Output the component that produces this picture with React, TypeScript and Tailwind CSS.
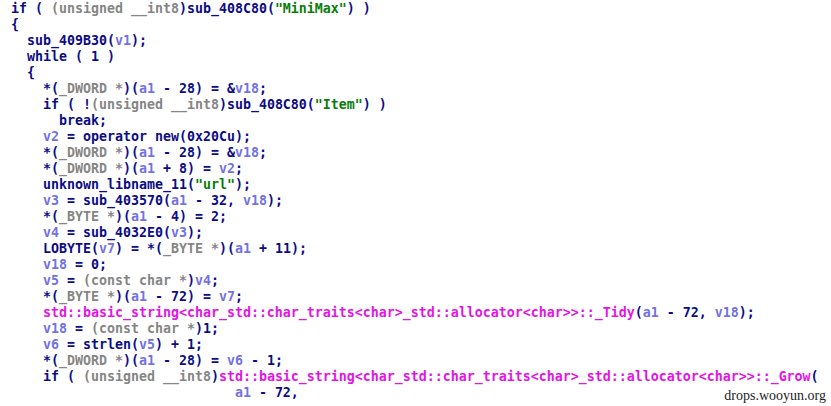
type Seg = [string, string];

const N = "text-[#0c0c86]";
const V = "text-[#7272e2]";
const G = "text-[#858585]";
const S = "text-[#0a7d0a]";
const M = "text-[#e414e4]";

const STD = "std::basic_string<char_std::char_traits<char>_std::allocator<char>>::";

const lines: [number, Seg[]][] = [
  [0, [[N, "if ( "], [G, "(unsigned __int8"], [N, ")sub_408C80("], [S, '"MiniMax"'], [N, ") )"]]],
  [0, [[N, "{"]]],
  [2, [[N, "sub_409B30("], [V, "v1"], [N, ");"]]],
  [2, [[N, "while ( 1 )"]]],
  [2, [[N, "{"]]],
  [4, [[N, "*("], [G, "_DWORD *"], [N, ")("], [V, "a1"], [N, " - 28) = &"], [V, "v18"], [N, ";"]]],
  [4, [[N, "if ( !"], [G, "(unsigned __int8"], [N, ")sub_408C80("], [S, '"Item"'], [N, ") )"]]],
  [6, [[N, "break;"]]],
  [4, [[V, "v2"], [N, " = operator new(0x20Cu);"]]],
  [4, [[N, "*("], [G, "_DWORD *"], [N, ")("], [V, "a1"], [N, " - 28) = &"], [V, "v18"], [N, ";"]]],
  [4, [[N, "*("], [G, "_DWORD *"], [N, ")("], [V, "a1"], [N, " + 8) = "], [V, "v2"], [N, ";"]]],
  [4, [[N, "unknown_libname_11("], [S, '"url"'], [N, ");"]]],
  [4, [[V, "v3"], [N, " = sub_403570("], [V, "a1"], [N, " - 32, "], [V, "v18"], [N, ");"]]],
  [4, [[N, "*("], [G, "_BYTE *"], [N, ")("], [V, "a1"], [N, " - 4) = 2;"]]],
  [4, [[V, "v4"], [N, " = sub_4032E0("], [V, "v3"], [N, ");"]]],
  [4, [[N, "LOBYTE("], [V, "v7"], [N, ") = *("], [G, "_BYTE *"], [N, ")("], [V, "a1"], [N, " + 11);"]]],
  [4, [[V, "v18"], [N, " = 0;"]]],
  [4, [[V, "v5"], [N, " = "], [G, "(const char *"], [N, ")"], [V, "v4"], [N, ";"]]],
  [4, [[N, "*("], [G, "_BYTE *"], [N, ")("], [V, "a1"], [N, " - 72) = "], [V, "v7"], [N, ";"]]],
  [4, [[M, STD + "_Tidy"], [N, "("], [V, "a1"], [N, " - 72, "], [V, "v18"], [N, ");"]]],
  [4, [[V, "v18"], [N, " = "], [G, "(const char *"], [N, ")1;"]]],
  [4, [[V, "v6"], [N, " = strlen("], [V, "v5"], [N, ") + 1;"]]],
  [4, [[N, "*("], [G, "_DWORD *"], [N, ")("], [V, "a1"], [N, " - 28) = "], [V, "v6"], [N, " - 1;"]]],
  [4, [[N, "if ( "], [G, "(unsigned __int8"], [N, ")"], [M, STD + "_Grow"], [N, "("]]],
  [28, [[V, "a1"], [N, " - 72,"]]],
];

export default function App() {
  return (
    <div className="relative h-[406px] w-[831px] overflow-hidden bg-white">
      <div className="flex flex-col pl-[11px] pt-[1px] font-['DejaVu_Sans_Mono',monospace] text-[13.29px] font-bold leading-[16px]">
        {lines.map(([indent, segs], i) => (
          <div key={i} className="h-4 whitespace-pre">
            {" ".repeat(indent)}
            {segs.map(([c, t], j) => (
              <span key={j} className={c}>
                {t}
              </span>
            ))}
          </div>
        ))}
      </div>
      <div className="absolute bottom-[3px] right-[5px] font-['Liberation_Serif',serif] text-[14px] leading-none text-[#1e1e1e]">
        drops.wooyun.org
      </div>
    </div>
  );
}
